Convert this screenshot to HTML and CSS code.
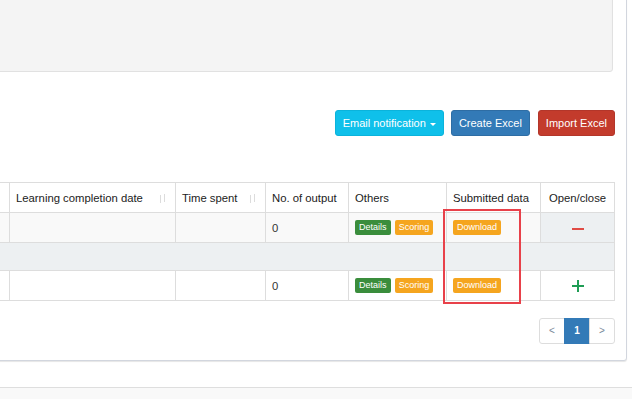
FILE: index.html
```html
<!DOCTYPE html>
<html lang="en">
<head>
    <meta charset="UTF-8">
    <meta name="viewport" content="width=device-width, initial-scale=1.0">
    <title>Learning records</title>
    <link rel="stylesheet" href="styles.css">
</head>
<body>
    <div class="content">
        <div class="box">
            <div class="well"></div>

            <div class="toolbar">
                <button class="btn btn-info">Email notification <span class="caret"></span></button>
                <button class="btn btn-primary">Create Excel</button>
                <button class="btn btn-danger">Import Excel</button>
            </div>

            <div class="table-wrap">
                <table class="data-table">
                    <colgroup>
                        <col style="width: 69px">
                        <col style="width: 166px">
                        <col style="width: 90px">
                        <col style="width: 83px">
                        <col style="width: 98px">
                        <col style="width: 94px">
                        <col style="width: 74px">
                    </colgroup>
                    <thead>
                        <tr>
                            <th><span class="sort-icon"></span></th>
                            <th>Learning completion date<span class="sort-icon"></span></th>
                            <th>Time spent<span class="sort-icon"></span></th>
                            <th>No. of output</th>
                            <th>Others</th>
                            <th>Submitted data</th>
                            <th class="center">Open/close</th>
                        </tr>
                    </thead>
                    <tbody>
                        <tr class="row-striped">
                            <td></td>
                            <td></td>
                            <td></td>
                            <td>0</td>
                            <td>
                                <span class="label label-success">Details</span>
                                <span class="label label-warning">Scoring</span>
                            </td>
                            <td><span class="label label-warning">Download</span></td>
                            <td class="center toggle-open"><span class="icon-minus"></span></td>
                        </tr>
                        <tr class="row-detail">
                            <td colspan="7"></td>
                        </tr>
                        <tr>
                            <td></td>
                            <td></td>
                            <td></td>
                            <td>0</td>
                            <td>
                                <span class="label label-success">Details</span>
                                <span class="label label-warning">Scoring</span>
                            </td>
                            <td><span class="label label-warning">Download</span></td>
                            <td class="center"><span class="icon-plus"></span></td>
                        </tr>
                    </tbody>
                </table>
                <div class="highlight-box"></div>
            </div>

            <ul class="pagination">
                <li>&lt;</li>
                <li class="active">1</li>
                <li>&gt;</li>
            </ul>
        </div>
    </div>

    <footer class="main-footer"></footer>
</body>
</html>
```

FILE: styles.css
```css
:root {
    --info: #0fc0ea;
    --primary: #337ab7;
    --danger: #c33b2c;
    --success: #3a8d3c;
    --warning: #f5a51f;

    --border-color: #dddddd;
    --box-border: #d2d6de;
    --text-primary: #333333;
}

* {
    margin: 0;
    padding: 0;
    box-sizing: border-box;
}

html,
body {
    width: 632px;
    height: 399px;
    overflow: hidden;
}

body {
    font-family: "Liberation Sans", Arial, sans-serif;
    color: var(--text-primary);
    background: #ffffff;
}

.content {
    width: 632px;
}

/* 主卡片 */
.box {
    width: 698px;
    margin: -30px 0 0 -71px;
    padding: 10px 11px 16px 10px;
    border: 1px solid var(--box-border);
    border-radius: 3px;
    background: #ffffff;
    box-shadow: 0 1px 1px rgba(0, 0, 0, 0.1);
}

.well {
    height: 91px;
    margin-right: 2px;
    background: #f4f4f4;
    border: 1px solid #e1e1e1;
    border-radius: 3px;
    box-shadow: inset 0 1px 1px rgba(0, 0, 0, 0.05);
}

/* 按钮 */
.toolbar {
    display: flex;
    justify-content: flex-end;
    gap: 7px;
    margin-top: 38px;
}

.btn {
    height: 26px;
    padding: 0 7px;
    font-family: inherit;
    font-size: 11px;
    color: #ffffff;
    border: 1px solid transparent;
    border-radius: 3px;
    cursor: pointer;
}

.btn-info {
    background: var(--info);
    border-color: #0bb3db;
}

.btn-primary {
    background: var(--primary);
    border-color: #2e6da4;
}

.btn-danger {
    background: var(--danger);
    border-color: #b3362a;
    margin-left: 1px;
}

.caret {
    display: inline-block;
    width: 0;
    height: 0;
    margin-left: 1px;
    vertical-align: middle;
    border-top: 3px solid #ffffff;
    border-left: 3px solid transparent;
    border-right: 3px solid transparent;
}

/* 表格 */
.table-wrap {
    position: relative;
    margin-top: 46px;
}

.data-table {
    width: 675px;
    table-layout: fixed;
    border-collapse: collapse;
    font-size: 11.3px;
}

.data-table th,
.data-table td {
    height: 30px;
    padding: 0 6px;
    border: 1px solid var(--border-color);
    text-align: left;
    vertical-align: middle;
    white-space: nowrap;
    overflow: hidden;
}

.data-table th {
    font-weight: normal;
    color: #222222;
}

.data-table .center {
    text-align: center;
}

.sort-icon {
    float: right;
    width: 7px;
    height: 9px;
    margin: 2px 3px 0 0;
    background:
        linear-gradient(#dcdcdc, #dcdcdc) 1px 1px / 1px 8px no-repeat,
        linear-gradient(#dcdcdc, #dcdcdc) 5px 0 / 1px 8px no-repeat;
}

.row-striped td {
    background: #f9f9f9;
}

.data-table .row-striped .toggle-open,
.row-detail td {
    background: #edf0f2;
}

.data-table .row-detail td {
    height: 28px;
}

.label {
    display: inline-block;
    height: 15px;
    padding: 0 4px;
    font-size: 9px;
    line-height: 15px;
    color: #ffffff;
    border-radius: 2px;
    vertical-align: middle;
}

.label + .label {
    margin-left: 1px;
}

.label-success {
    background: var(--success);
}

.label-warning {
    background: var(--warning);
}

.icon-minus {
    display: inline-block;
    width: 12px;
    height: 2px;
    background: #e04b45;
    vertical-align: middle;
}

.icon-plus {
    display: inline-block;
    width: 12px;
    height: 12px;
    vertical-align: middle;
    background:
        linear-gradient(#1f9d55, #1f9d55) 0 5px / 12px 2px no-repeat,
        linear-gradient(#1f9d55, #1f9d55) 5px 0 / 2px 12px no-repeat;
}

/* 标注框 */
.highlight-box {
    position: absolute;
    left: 503px;
    top: 27px;
    width: 78px;
    height: 95px;
    border: 2px solid #e8414a;
}

/* 分页 */
.pagination {
    display: flex;
    justify-content: flex-end;
    margin-top: 17px;
    list-style: none;
}

.pagination li {
    width: 26px;
    height: 26px;
    line-height: 24px;
    text-align: center;
    font-size: 10px;
    color: #7a8a9a;
    border: 1px solid var(--border-color);
    margin-left: -1px;
}

.pagination li:first-child {
    border-radius: 3px 0 0 3px;
}

.pagination li:last-child {
    border-radius: 0 3px 3px 0;
}

.pagination li.active {
    background: var(--primary);
    border-color: var(--primary);
    color: #ffffff;
    font-weight: bold;
}

.main-footer {
    height: 12px;
    margin-top: 26px;
    background: #f9f9f9;
    border-top: 1px solid #dedede;
}
```
